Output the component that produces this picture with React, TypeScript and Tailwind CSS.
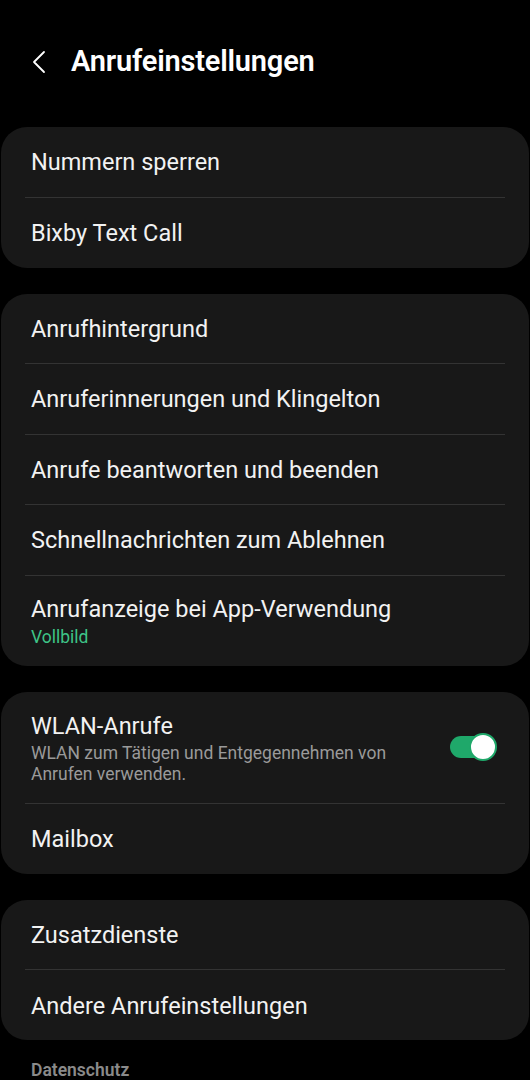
import React from "react";

type Item = { title: string; sub?: string; subColor?: "green" | "gray"; toggle?: boolean };

const groups: Item[][] = [
  [{ title: "Nummern sperren" }, { title: "Bixby Text Call" }],
  [
    { title: "Anrufhintergrund" },
    { title: "Anruferinnerungen und Klingelton" },
    { title: "Anrufe beantworten und beenden" },
    { title: "Schnellnachrichten zum Ablehnen" },
    { title: "Anrufanzeige bei App-Verwendung", sub: "Vollbild", subColor: "green" },
  ],
  [
    {
      title: "WLAN-Anrufe",
      sub: "WLAN zum Tätigen und Entgegennehmen von Anrufen verwenden.",
      subColor: "gray",
      toggle: true,
    },
    { title: "Mailbox" },
  ],
  [{ title: "Zusatzdienste" }, { title: "Andere Anrufeinstellungen" }],
];

function Row({ item, last }: { item: Item; last: boolean }) {
  return (
    <div className="relative">
      {item.sub ? (
        item.toggle ? (
          <div className="flex items-center h-[111px] pl-[30px] pr-[33px]">
            <div className="flex-1 pr-8 pt-[2px]">
              <div className="text-[23.5px] leading-[30px] text-[#f2f2f2]">{item.title}</div>
              <div className="text-[17.5px] leading-[21px] text-[#9a9a9a] mt-[2px]">{item.sub}</div>
            </div>
            <div className="relative w-[46px] h-[22px] rounded-full bg-[#1fa86a]">
              <div className="absolute right-[-1px] top-[-3px] w-[28px] h-[28px] rounded-full bg-white border-[2px] border-[#1fa86a]" />
            </div>
          </div>
        ) : (
          <div className="flex flex-col justify-center h-[90px] pl-[30px] pr-[24px]">
            <div className="text-[23.5px] leading-[30px] text-[#f2f2f2]">{item.title}</div>
            <div className="text-[17.5px] leading-[22px] mt-[2px] text-[#3ec487]">{item.sub}</div>
          </div>
        )
      ) : (
        <div className={`flex items-center ${last ? "h-[70px]" : "h-[69.5px]"} pl-[30px] pr-[24px] pt-[1px]`}>
          <div className="text-[23.5px] leading-[30px] text-[#f2f2f2]">{item.title}</div>
        </div>
      )}
      {!last && <div className="mx-[24px] h-px bg-[#333333]" />}
    </div>
  );
}

export default function App() {
  return (
    <div
      className="w-[530px] h-[1080px] bg-black overflow-hidden"
      style={{ fontFamily: "Roboto, 'Noto Sans', sans-serif" }}
    >
      <div className="flex items-center h-[62px] mt-[31px] pl-[31px]">
        <svg width="16" height="24" viewBox="0 0 16 24" className="mr-[24px]">
          <path d="M13 2 L3 12 L13 22" fill="none" stroke="#ffffff" strokeWidth="1.8" strokeLinecap="round" strokeLinejoin="round" />
        </svg>
        <div className="text-[29px] font-semibold text-white tracking-[-0.2px]">Anrufeinstellungen</div>
      </div>
      <div className="flex flex-col gap-[26px] mt-[34px] px-[1px]">
        {groups.map((g, gi) => (
          <div key={gi} className="bg-[#181818] rounded-[26px]">
            {g.map((it, i) => (
              <Row key={i} item={it} last={i === g.length - 1} />
            ))}
          </div>
        ))}
      </div>
      <div className="pl-[31px] mt-[19px] text-[17.5px] leading-[22px] font-semibold text-[#8a8a8a]">Datenschutz</div>
    </div>
  );
}
